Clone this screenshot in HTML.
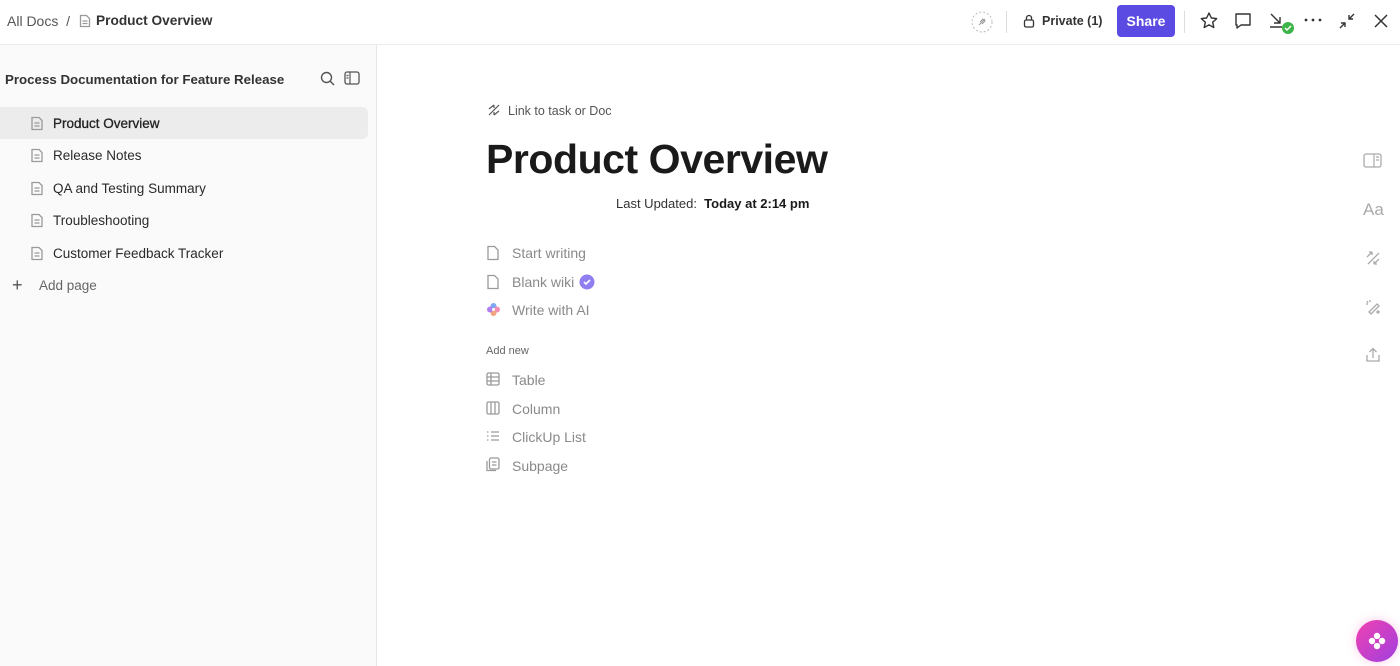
<!DOCTYPE html>
<html><head><style>
*{box-sizing:border-box;margin:0;padding:0}
body{width:1400px;height:666px;overflow:hidden;font-family:"Liberation Sans",sans-serif;background:#fff;color:#202020;position:relative}
.top{position:absolute;left:0;top:0;width:1400px;height:45px;border-bottom:1px solid #ececec;background:#fff}
.side{position:absolute;left:0;top:45px;width:377px;height:621px;background:#fafafb;border-right:1px solid #e6e6e6}
.abs{position:absolute}
svg{position:absolute}
.item{position:absolute;left:53px;font-size:13.5px;color:#2a2a2a}
.g{color:#8a8a8a;font-size:14px;position:absolute;left:512px}
.ico{stroke:#9a9a9a;fill:none;stroke-width:1.3}
</style></head><body>
<div class="top">
 <div class="abs" style="left:7px;top:13px;font-size:14px;color:#555">All Docs &nbsp;/</div>
 <svg style="left:79px;top:14px" width="12" height="14" viewBox="0 0 12 14"><path class="ico" d="M1.5 1.5h6l3 3v8h-9z M3.5 7h5M3.5 9.5h5" stroke="#666"/></svg>
 <div class="abs" style="left:96px;top:13px;font-size:13.7px;font-weight:bold;color:#333">Product Overview</div>
 <svg style="left:971px;top:11px" width="22" height="22"><circle cx="11" cy="11" r="10" fill="none" stroke="#bbb" stroke-dasharray="2 2"/><path d="M8 14l6-6M9 11l3-3 2 2-3 3" stroke="#999" fill="none"/></svg>
 <div class="abs" style="left:1006px;top:11px;width:1px;height:22px;background:#ddd"></div>
 <svg style="left:1023px;top:14px" width="12" height="14"><rect x="1.5" y="6" width="9" height="7" rx="1.5" fill="none" stroke="#333" stroke-width="1.3"/><path d="M3.5 6V4a2.5 2.5 0 0 1 5 0v2" fill="none" stroke="#333" stroke-width="1.3"/></svg>
 <div class="abs" style="left:1042px;top:14px;font-size:12.5px;font-weight:bold;color:#333">Private (1)</div>
 <div class="abs" style="left:1117px;top:5px;width:58px;height:32px;background:#5b4be3;border-radius:4px;color:#fff;font-weight:bold;font-size:14px;text-align:center;line-height:32px">Share</div>
 <div class="abs" style="left:1184px;top:11px;width:1px;height:22px;background:#ddd"></div>
 <svg style="left:1199px;top:11px" width="20" height="20"><path d="M10 2l2.4 5 5.3.6-4 3.6 1.1 5.3L10 13.8 5.2 16.5l1.1-5.3-4-3.6 5.3-.6z" fill="none" stroke="#333" stroke-width="1.4" stroke-linejoin="round"/></svg>
 <svg style="left:1233px;top:11px" width="20" height="20"><path d="M3 3h14v11H8l-4 3v-3H3z" fill="none" stroke="#333" stroke-width="1.4" stroke-linejoin="round"/></svg>
 <svg style="left:1268px;top:11px" width="28" height="24"><path d="M3 3l9 9M12 6v6H6M2 16h12" fill="none" stroke="#333" stroke-width="1.4"/><circle cx="20" cy="17" r="6" fill="#3cb44a"/><path d="M17 17l2 2 4-4" stroke="#fff" stroke-width="1.5" fill="none"/></svg>
 <svg style="left:1303px;top:17px" width="20" height="6"><circle cx="3" cy="3" r="1.4" fill="#333"/><circle cx="10" cy="3" r="1.4" fill="#333"/><circle cx="17" cy="3" r="1.4" fill="#333"/></svg>
 <svg style="left:1338px;top:12px" width="18" height="18"><path d="M2 16l5-5M3 11h4v4M16 2l-5 5M11 3v4h4" fill="none" stroke="#333" stroke-width="1.4"/></svg>
 <svg style="left:1373px;top:13px" width="16" height="16"><path d="M2 2l12 12M14 2L2 14" stroke="#333" stroke-width="1.5"/></svg>
</div>
<div class="side">
 <div class="abs" style="left:5px;top:27px;font-size:13.3px;font-weight:bold;color:#333">Process Documentation for Feature Release</div>
 <svg style="left:320px;top:26px" width="16" height="16"><circle cx="6.5" cy="6.5" r="5" fill="none" stroke="#555" stroke-width="1.4"/><path d="M10 10l4 4" stroke="#555" stroke-width="1.5"/></svg>
 <svg style="left:344px;top:26px" width="16" height="14"><rect x="1" y="1" width="14" height="12" rx="2" fill="none" stroke="#555" stroke-width="1.3"/><path d="M6 1v12M2.5 4.5h2M2.5 7h2" stroke="#555" stroke-width="1.2"/></svg>
 <div class="abs" style="left:0;top:62px;width:368px;height:32px;background:#ececec;border-radius:0 6px 6px 0"></div>
</div>
<svg style="left:30px;top:116px" width="14" height="15" viewBox="0 0 14 15"><path class="ico" d="M2 1.5h7l3 3v9H2z M4.5 7h5M4.5 10h5"/></svg>
<svg style="left:30px;top:148px" width="14" height="15" viewBox="0 0 14 15"><path class="ico" d="M2 1.5h7l3 3v9H2z M4.5 7h5M4.5 10h5"/></svg>
<svg style="left:30px;top:181px" width="14" height="15" viewBox="0 0 14 15"><path class="ico" d="M2 1.5h7l3 3v9H2z M4.5 7h5M4.5 10h5"/></svg>
<svg style="left:30px;top:213px" width="14" height="15" viewBox="0 0 14 15"><path class="ico" d="M2 1.5h7l3 3v9H2z M4.5 7h5M4.5 10h5"/></svg>
<svg style="left:30px;top:246px" width="14" height="15" viewBox="0 0 14 15"><path class="ico" d="M2 1.5h7l3 3v9H2z M4.5 7h5M4.5 10h5"/></svg>
<div class="item" style="top:116px;color:#222;-webkit-text-stroke:0.3px #222">Product Overview</div>
<div class="item" style="top:148px">Release Notes</div>
<div class="item" style="top:181px">QA and Testing Summary</div>
<div class="item" style="top:213px">Troubleshooting</div>
<div class="item" style="top:246px">Customer Feedback Tracker</div>
<div class="abs" style="left:12px;top:275px;font-size:18px;color:#555">+</div>
<div class="abs" style="left:39px;top:278px;font-size:13.5px;color:#666">Add page</div>

<svg style="left:487px;top:103px" width="14" height="14"><path d="M2 6l5-4M7 2v3M12 8l-5 4M7 12V9M2 12L12 2" fill="none" stroke="#555" stroke-width="1.2"/></svg>
<div class="abs" style="left:508px;top:104px;font-size:12.5px;color:#555">Link to task or Doc</div>
<div class="abs" style="left:486px;top:136px;font-size:41px;font-weight:bold;color:#1a1a1a;letter-spacing:-0.45px">Product Overview</div>
<div class="abs" style="left:616px;top:196px;font-size:13px;color:#333">Last Updated: &nbsp;<b style="color:#1a1a1a">Today at 2:14 pm</b></div>

<svg style="left:486px;top:245px" width="14" height="16"><path class="ico" d="M2 1.5h6.5l3.5 3.5v9.5H2z"/></svg>
<div class="g" style="top:245px">Start writing</div>
<svg style="left:486px;top:274px" width="14" height="16"><path class="ico" d="M2 1.5h6.5l3.5 3.5v9.5H2z"/></svg>
<div class="g" style="top:274px">Blank wiki</div>
<svg style="left:579px;top:274px" width="16" height="16"><circle cx="8" cy="8" r="7.5" fill="#8f7ff0"/><path d="M5 8l2 2 4-4" stroke="#fff" stroke-width="1.6" fill="none"/></svg>
<svg style="left:486px;top:302px" width="15" height="15"><circle cx="7.5" cy="4" r="3" fill="#7fa7f2"/><circle cx="11" cy="7.5" r="3" fill="#f28fb4"/><circle cx="7.5" cy="11" r="3" fill="#f2a37f"/><circle cx="4" cy="7.5" r="3" fill="#b27ff2"/><circle cx="7.5" cy="7.5" r="1.5" fill="#fff"/></svg>
<div class="g" style="top:302px">Write with AI</div>
<div class="abs" style="left:486px;top:345px;font-size:11px;color:#666">Add new</div>
<svg style="left:486px;top:372px" width="14" height="14"><rect x="1" y="1" width="12" height="12" rx="1.5" class="ico"/><path class="ico" d="M1 5h12M1 9h12M5 1v12"/></svg>
<div class="g" style="top:372px">Table</div>
<svg style="left:486px;top:401px" width="14" height="14"><rect x="1" y="1" width="12" height="12" rx="1.5" class="ico"/><path class="ico" d="M5 1v12M9 1v12"/></svg>
<div class="g" style="top:401px">Column</div>
<svg style="left:486px;top:429px" width="14" height="14"><path class="ico" d="M1 3h1.5M1 7h1.5M1 11h1.5M5 3h8M5 7h8M5 11h8"/></svg>
<div class="g" style="top:429px">ClickUp List</div>
<svg style="left:486px;top:457px" width="14" height="15"><rect x="3.5" y="1" width="9.5" height="11" rx="1.5" class="ico"/><path class="ico" d="M1 4v9.5h9M6 5h4.5M6 8h4.5"/></svg>
<div class="g" style="top:458px">Subpage</div>

<svg style="left:1363px;top:152px" width="20" height="18"><rect x="1" y="2" width="17" height="13" rx="2" fill="none" stroke="#aaa" stroke-width="1.3"/><path d="M11 2v13M13 5h3M13 8h3" stroke="#aaa" stroke-width="1.2"/></svg>
<div class="abs" style="left:1363px;top:200px;font-size:17px;color:#aaa">Aa</div>
<svg style="left:1364px;top:249px" width="18" height="18"><path d="M3 8l5-5M8 3H5M8 3v3M15 10l-5 5M10 15h3M10 15v-3M4 15L15 4" fill="none" stroke="#aaa" stroke-width="1.3"/></svg>
<svg style="left:1364px;top:298px" width="18" height="18"><path d="M5 14l8-8 2 2-8 8zM3 3l1 2M6 2v2M2 6h2M14 12v4M12 14h4" fill="none" stroke="#aaa" stroke-width="1.3"/></svg>
<svg style="left:1365px;top:346px" width="16" height="18"><path d="M8 12V3M4.5 6L8 2.5 11.5 6M2 9v6h12V9" fill="none" stroke="#aaa" stroke-width="1.3"/></svg>

<div class="abs" style="left:1356px;top:620px;width:42px;height:42px;border-radius:50%;background:linear-gradient(135deg,#f040b0,#a040e0);box-shadow:0 0 10px rgba(240,80,180,.3)"></div>
<svg style="left:1367px;top:631px" width="20" height="20"><g fill="#fff"><circle cx="10" cy="5" r="3.2"/><circle cx="15" cy="10" r="3.2"/><circle cx="10" cy="15" r="3.2"/><circle cx="5" cy="10" r="3.2"/></g><circle cx="10" cy="10" r="2" fill="#d040c0"/></svg>
</body></html>
